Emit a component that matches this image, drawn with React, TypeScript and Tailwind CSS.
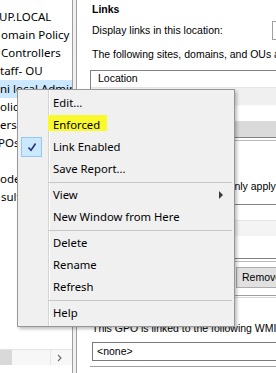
import React from "react";

const treeRows: { text: string; off: number; selected?: boolean }[] = [
  { text: "UP.LOCAL", off: -1 },
  { text: "omain Policy", off: 1 },
  { text: "Controllers", off: 1 },
  { text: "taff- OU", off: 0 },
  { text: "ni local Admin", off: 0, selected: true },
  { text: "olicy", off: 0 },
  { text: "ers", off: 0 },
  { text: "POs", off: -2 },
  { text: "", off: 0 },
  { text: "odel", off: 0 },
  { text: "sult", off: 1 },
];

function MenuItem({ children }: { children: React.ReactNode }) {
  return (
    <div className="relative flex h-[22px] items-center whitespace-nowrap pl-[35px]">
      {children}
    </div>
  );
}

function Sep() {
  return (
    <div className="flex h-[4px] items-center pl-[31px] pr-[2px]">
      <div className="h-px w-full bg-[#c6c6c6]" />
    </div>
  );
}

export default function App() {
  return (
    <div className="relative flex h-[373px] w-[276px] overflow-hidden bg-white">
      {/* Left tree pane */}
      <div className="flex w-[73px] shrink-0 flex-col overflow-hidden border-r border-[#a0a0a0] font-['Noto_Sans',sans-serif] text-[11.5px] text-black">
        <div className="flex-1 pt-[8px]">
          {treeRows.map((r, i) => (
            <div
              key={i}
              className={
                "flex h-[18px] items-center whitespace-nowrap " +
                (r.selected ? "bg-[#cce8ff]" : "")
              }
            >
              <span style={{ marginLeft: r.off }}>{r.text}</span>
            </div>
          ))}
        </div>
        <div className="mb-[8px] flex h-[16px] items-stretch border-t border-[#e3e3e3] bg-[#f7f7f7]">
          <div className="w-[12px] bg-[#d9d9d9]" />
          <div className="w-[38px]" />
          <div className="flex w-[22px] items-center justify-center border-l border-[#e6e6e6] pr-[5px]">
            <svg width="5" height="8" viewBox="0 0 5 8">
              <polyline points="1,1 4,4 1,7" fill="none" stroke="#6a6a6a" strokeWidth="1.1" />
            </svg>
          </div>
        </div>
      </div>

      {/* Splitter */}
      <div className="w-[3px] shrink-0 bg-[#f0f0f0]" />

      {/* Right pane */}
      <div className="flex min-w-0 flex-1 flex-col overflow-hidden border-l border-[#a0a0a0] pl-[15px] font-['Liberation_Sans',Arial,sans-serif] text-[10.5px] text-black">
        <div className="mt-[3px] h-[13px] whitespace-nowrap font-bold leading-[13px]">Links</div>
        <div className="mt-[5px] flex h-[19px] items-center">
          <span className="w-[180px] shrink-0 whitespace-nowrap">Display links in this location:</span>
          <div className="h-[19px] w-[120px] shrink-0 border border-[#a0a0a0] bg-white" />
        </div>
        <div className="mt-[8px] h-[13px] whitespace-nowrap leading-[13px]">
          The following sites, domains, and OUs are linked to this GPO:
        </div>

        {/* Links listview */}
        <div className="ml-[-2px] mt-[9px] w-[300px] shrink-0 border border-[#828282]">
          <div className="flex h-[17px] items-center border-b border-[#e5e5e5] bg-white pl-[7px]">
            Location
          </div>
          <div className="h-[17px] bg-[#f0f0f0]" />
          <div className="h-[16px] border-t border-[#fafafa] bg-white" />
          <div className="h-[16px] bg-[#dadada]" />
        </div>
        <div className="ml-[-2px] mt-[2px] h-px w-[300px] shrink-0 bg-[#b9b9b9]" />

        <div className="mt-[13px] h-[13px] whitespace-nowrap font-bold leading-[13px]">Security Filtering</div>
        <div className="mt-[13px] h-[13px] whitespace-nowrap leading-[13px]">
          The settings in this GPO can only apply to the following groups, users, and computers:
        </div>

        {/* Security listview */}
        <div className="ml-[-2px] mt-[11px] w-[300px] shrink-0 border border-[#828282]">
          <div className="flex h-[16px] items-center border-b border-[#e5e5e5] bg-white pl-[7px]">Name</div>
          <div className="h-[15px] bg-[#f4f4f4]" />
          <div className="h-[22px] bg-white" />
        </div>
        <div className="ml-[-2px] mt-[2px] h-px w-[300px] shrink-0 bg-[#b9b9b9]" />

        <div className="mt-[5px] flex h-[21px] gap-[69px]">
          <div className="flex w-[75px] shrink-0 items-center justify-center border border-[#adadad] bg-[#e1e1e1]">Add...</div>
          <div className="flex w-[75px] shrink-0 items-center border border-[#adadad] bg-[#e1e1e1] pl-[5px]">Remove</div>
        </div>

        <div className="ml-[-2px] mt-[7px] h-px w-[300px] shrink-0 bg-[#a0a0a0]" />
        <div className="ml-[-2px] mt-[1px] h-px w-[300px] shrink-0 bg-[#d8d8d8]" />

        <div className="mt-[6px] h-[13px] whitespace-nowrap font-bold leading-[13px]">WMI Filtering</div>
        <div className="mt-[5px] h-[13px] whitespace-nowrap leading-[13px]">
          This GPO is linked to the following WMI filter:
        </div>
        <div className="mt-[7px] flex h-[19px] w-[220px] shrink-0 items-center border border-[#7a7a7a] bg-white pl-[4px]">
          &lt;none&gt;
        </div>
        <div className="ml-[-2px] mt-[5px] h-px w-[300px] shrink-0 bg-[#a0a0a0]" />
      </div>

      {/* Context menu */}
      <div className="absolute left-[17px] top-[89px] h-[238px] w-[218px] border border-[#979797] bg-[#f0f0f0] pt-[2px] font-['Noto_Sans',sans-serif] text-[11.3px] text-black shadow-[2px_2px_3px_rgba(0,0,0,0.25)]">
        <div className="absolute bottom-0 left-[30px] top-0 w-px bg-[#d4d4d4]" />
        <div className="absolute bottom-0 left-[31px] top-0 w-px bg-white" />
        <div className="relative flex flex-col">
          <MenuItem>Edit...</MenuItem>
          <MenuItem>
            <div className="absolute left-[30px] top-[1px] h-[16px] w-[59px] bg-[#f9f92c]" />
            <span className="relative">Enforced</span>
          </MenuItem>
          <MenuItem>
            <div className="absolute left-[3px] top-[1px] flex h-[20px] w-[21px] items-center justify-center border border-[#90c8f6] bg-[#cce8ff]">
              <svg width="10" height="10" viewBox="0 0 10 10">
                <polyline points="1.5,5.5 4,8.2 8.6,1.5" fill="none" stroke="#1b2f7a" strokeWidth="1.5" />
              </svg>
            </div>
            Link Enabled
          </MenuItem>
          <MenuItem>Save Report...</MenuItem>
          <Sep />
          <MenuItem>
            View
            <div className="absolute left-[201px] top-[7px] h-0 w-0 border-y-[4px] border-l-[4px] border-y-transparent border-l-[#3a3a3a]" />
          </MenuItem>
          <MenuItem>New Window from Here</MenuItem>
          <Sep />
          <MenuItem>Delete</MenuItem>
          <MenuItem>Rename</MenuItem>
          <MenuItem>Refresh</MenuItem>
          <Sep />
          <MenuItem>Help</MenuItem>
        </div>
      </div>
    </div>
  );
}
